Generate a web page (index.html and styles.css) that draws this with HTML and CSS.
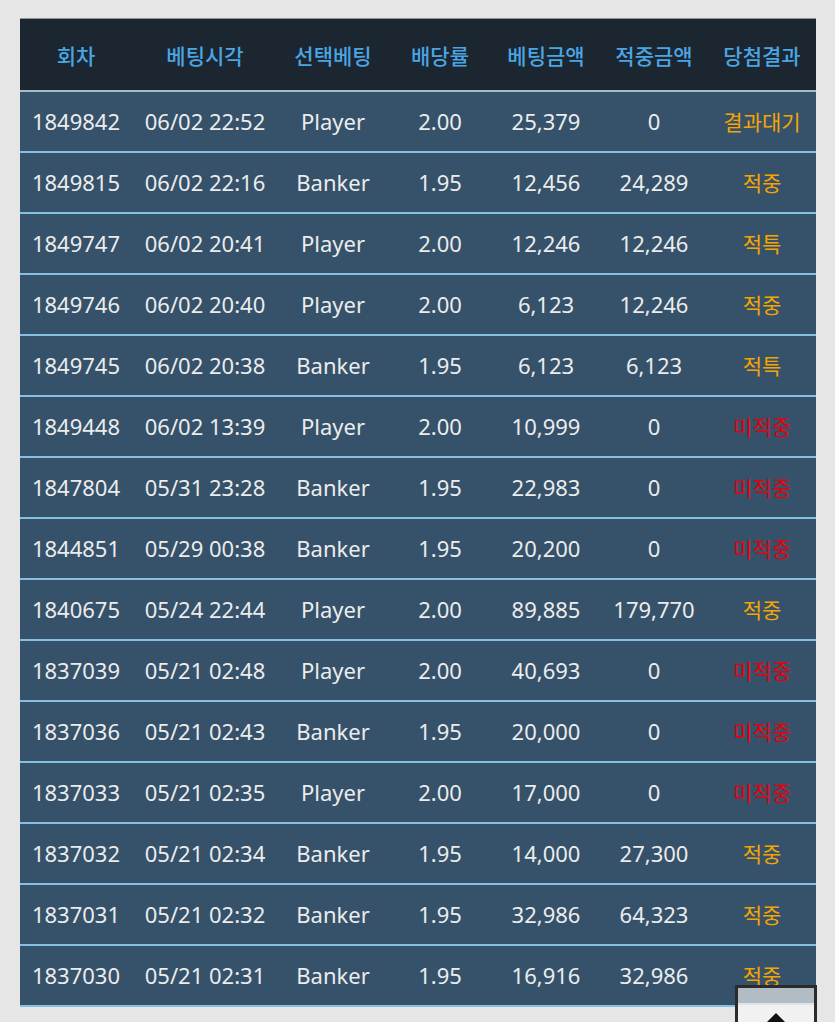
FILE: index.html
```html
<!DOCTYPE html>
<html lang="ko">
<head>
<meta charset="utf-8">
<title>베팅내역</title>
<link rel="stylesheet" href="styles.css">
</head>
<body>
<div class="wrap">
<table class="bets">
  <colgroup>
    <col class="c1"><col class="c2"><col class="c3"><col class="c4"><col class="c5"><col class="c6"><col class="c7">
  </colgroup>
  <thead>
    <tr><th>회차</th><th>베팅시각</th><th>선택베팅</th><th>배당률</th><th>베팅금액</th><th>적중금액</th><th>당첨결과</th></tr>
  </thead>
  <tbody>
    <tr><td>1849842</td><td>06/02 22:52</td><td>Player</td><td>2.00</td><td>25,379</td><td>0</td><td class="wait">결과대기</td></tr>
    <tr><td>1849815</td><td>06/02 22:16</td><td>Banker</td><td>1.95</td><td>12,456</td><td>24,289</td><td class="win">적중</td></tr>
    <tr><td>1849747</td><td>06/02 20:41</td><td>Player</td><td>2.00</td><td>12,246</td><td>12,246</td><td class="win">적특</td></tr>
    <tr><td>1849746</td><td>06/02 20:40</td><td>Player</td><td>2.00</td><td>6,123</td><td>12,246</td><td class="win">적중</td></tr>
    <tr><td>1849745</td><td>06/02 20:38</td><td>Banker</td><td>1.95</td><td>6,123</td><td>6,123</td><td class="win">적특</td></tr>
    <tr><td>1849448</td><td>06/02 13:39</td><td>Player</td><td>2.00</td><td>10,999</td><td>0</td><td class="lose">미적중</td></tr>
    <tr><td>1847804</td><td>05/31 23:28</td><td>Banker</td><td>1.95</td><td>22,983</td><td>0</td><td class="lose">미적중</td></tr>
    <tr><td>1844851</td><td>05/29 00:38</td><td>Banker</td><td>1.95</td><td>20,200</td><td>0</td><td class="lose">미적중</td></tr>
    <tr><td>1840675</td><td>05/24 22:44</td><td>Player</td><td>2.00</td><td>89,885</td><td>179,770</td><td class="win">적중</td></tr>
    <tr><td>1837039</td><td>05/21 02:48</td><td>Player</td><td>2.00</td><td>40,693</td><td>0</td><td class="lose">미적중</td></tr>
    <tr><td>1837036</td><td>05/21 02:43</td><td>Banker</td><td>1.95</td><td>20,000</td><td>0</td><td class="lose">미적중</td></tr>
    <tr><td>1837033</td><td>05/21 02:35</td><td>Player</td><td>2.00</td><td>17,000</td><td>0</td><td class="lose">미적중</td></tr>
    <tr><td>1837032</td><td>05/21 02:34</td><td>Banker</td><td>1.95</td><td>14,000</td><td>27,300</td><td class="win">적중</td></tr>
    <tr><td>1837031</td><td>05/21 02:32</td><td>Banker</td><td>1.95</td><td>32,986</td><td>64,323</td><td class="win">적중</td></tr>
    <tr><td>1837030</td><td>05/21 02:31</td><td>Banker</td><td>1.95</td><td>16,916</td><td>32,986</td><td class="win">적중</td></tr>
  </tbody>
</table>
</div>
<button class="to-top" type="button" aria-label="맨 위로">
  <span class="to-top-band"></span>
  <span class="to-top-body"><span class="arrow"></span></span>
</button>
</body>
</html>
```

FILE: styles.css
```css
html, body {
  margin: 0;
  padding: 0;
  background: #e6e6e6;
  font-family: "Noto Sans", "Noto Sans CJK KR", sans-serif;
  overflow: hidden;
}
.wrap {
  padding: 18px 0 0 20px;
}
.bets {
  width: 796px;
  table-layout: fixed;
  border-collapse: separate;
  border-spacing: 0;
  border-top: 1px solid #8e9499;
}
.c1 { width: 112px; }
.c2 { width: 146px; }
.c3 { width: 110px; }
.c4 { width: 104px; }
.c5 { width: 108px; }
.c6 { width: 108px; }
.c7 { width: 108px; }

.bets th {
  height: 71px;
  padding: 0;
  background: #1b2631;
  color: #4ba5e2;
  font-family: "Noto Sans CJK KR", sans-serif;
  font-size: 21px;
  font-weight: 500;
  text-align: center;
  border-bottom: 2px solid #a6bccb;
  white-space: nowrap;
}
.bets td {
  height: 57px;
  padding: 0 0 2px;
  background: #35526a;
  color: #ececec;
  font-size: 22px;
  text-align: center;
  border-bottom: 2px solid #86bfe2;
  white-space: nowrap;
}
.bets td.wait,
.bets td.win {
  color: #f6a500;
  font-family: "Noto Sans CJK KR", sans-serif;
  font-size: 21px;
}
.bets td.lose {
  color: #e6000a;
  font-family: "Noto Sans CJK KR", sans-serif;
  font-size: 21px;
}

.to-top {
  position: fixed;
  left: 735px;
  top: 985px;
  width: 82px;
  height: 60px;
  padding: 0;
  border: 3px solid #2b2b2b;
  background: #f1f1f1;
  display: flex;
  flex-direction: column;
}
.to-top-band {
  display: block;
  width: 100%;
  height: 15px;
  background: #b2bcc4;
  border-bottom: 2px solid #dde3e8;
}
.to-top-body {
  display: flex;
  justify-content: center;
  width: 100%;
  padding-top: 8px;
}
.arrow {
  width: 0;
  height: 0;
  border-left: 12px solid transparent;
  border-right: 12px solid transparent;
  border-bottom: 12px solid #111;
}
```
